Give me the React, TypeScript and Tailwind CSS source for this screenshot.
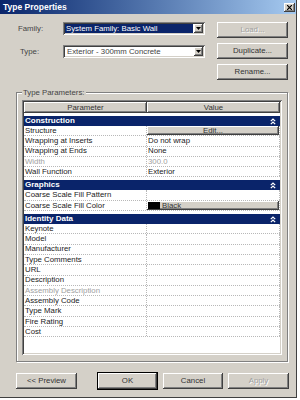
import React from "react";

type Row = {
  name: string;
  value?: string;
  kind?: "edit" | "color";
  disabled?: boolean;
};

type Group = { title: string; rows: Row[] };

const groups: Group[] = [
  {
    title: "Construction",
    rows: [
      { name: "Structure", kind: "edit" },
      { name: "Wrapping at Inserts", value: "Do not wrap" },
      { name: "Wrapping at Ends", value: "None" },
      { name: "Width", value: "300.0", disabled: true },
      { name: "Wall Function", value: "Exterior" },
    ],
  },
  {
    title: "Graphics",
    rows: [
      { name: "Coarse Scale Fill Pattern" },
      { name: "Coarse Scale Fill Color", kind: "color" },
    ],
  },
  {
    title: "Identity Data",
    rows: [
      { name: "Keynote" },
      { name: "Model" },
      { name: "Manufacturer" },
      { name: "Type Comments" },
      { name: "URL" },
      { name: "Description" },
      { name: "Assembly Description", disabled: true },
      { name: "Assembly Code" },
      { name: "Type Mark" },
      { name: "Fire Rating" },
      { name: "Cost" },
    ],
  },
];

const raised =
  "bg-[#d4d0c8] shadow-[inset_-1px_-1px_0_#404040,inset_1px_1px_0_#ffffff,inset_-2px_-2px_0_#808080]";
const sunken =
  "shadow-[inset_1px_1px_0_#808080,inset_-1px_-1px_0_#ffffff,inset_2px_2px_0_#404040,inset_-2px_-2px_0_#d4d0c8]";

function Button({
  label,
  width,
  disabled,
  primary,
}: {
  label: string;
  width: string;
  disabled?: boolean;
  primary?: boolean;
}) {
  return (
    <div
      className={`${width} h-[16px] flex items-center justify-center ${raised} ${
        primary ? "outline outline-1 outline-black" : ""
      } ${
        disabled
          ? "text-[#a0a0a0] [text-shadow:1px_1px_0_#ffffff]"
          : "text-[#333333]"
      }`}
    >
      {label}
    </div>
  );
}

function DropArrow() {
  return (
    <div className={`w-[9px] h-[9px] flex items-center justify-center ${raised}`}>
      <svg width="5" height="3" viewBox="0 0 5 3">
        <path d="M0 0h5L2.5 3z" fill="#000" />
      </svg>
    </div>
  );
}

function Chevrons() {
  return (
    <svg width="6" height="7" viewBox="0 0 6 7" fill="none" stroke="#fff" strokeWidth="1.2">
      <polyline points="0.8,3.2 3,1 5.2,3.2" />
      <polyline points="0.8,6.2 3,4 5.2,6.2" />
    </svg>
  );
}

export default function App() {
  return (
    <div className="w-[300px] h-[400px] bg-white font-['Liberation_Sans',Arial,sans-serif] text-[7.8px] leading-none">
      <div className="w-[297px] h-[398px] bg-[#d4d0c8] border-r border-b border-[#404040] flex flex-col">
        {/* title bar */}
        <div className="h-[14px] flex items-center justify-between pl-[3px] pr-[1px] bg-gradient-to-r from-[#0a246a] to-[#a6caf0]">
          <span className="text-white font-bold text-[8.5px]">Type Properties</span>
          <div className={`w-[11px] h-[9px] flex items-center justify-center ${raised}`}>
            <svg width="5" height="5" viewBox="0 0 5 5" stroke="#000" strokeWidth="1.2">
              <path d="M0 0L5 5M5 0L0 5" />
            </svg>
          </div>
        </div>

        {/* family / type */}
        <div className="flex mt-[8px] pl-[18px]">
          <div className="flex flex-col gap-[10px]">
            <div className="flex items-center">
              <span className="w-[45px] text-[#444444]">Family:</span>
              <div className={`w-[142px] h-[13px] bg-white p-[2px] flex items-center ${sunken}`}>
                <div className="flex-1 h-[9px] mr-[1px] bg-[#0a246a] text-white flex items-center pl-[1px]">
                  System Family: Basic Wall
                </div>
                <DropArrow />
              </div>
            </div>
            <div className="flex items-center">
              <span className="w-[45px] text-[#444444] pl-[2px]">Type:</span>
              <div className={`w-[142px] h-[13px] bg-white p-[2px] flex items-center ${sunken}`}>
                <div className="flex-1 h-[9px] text-[#444444] flex items-center pl-[2px]">
                  Exterior - 300mm Concrete
                </div>
                <DropArrow />
              </div>
            </div>
          </div>
          <div className="flex flex-col gap-[5px] ml-[12px]">
            <Button label="Load..." width="w-[71px]" disabled />
            <Button label="Duplicate..." width="w-[71px]" />
            <Button label="Rename..." width="w-[71px]" />
          </div>
        </div>

        {/* type parameters group */}
        <div className="relative ml-[16px] mt-[12px] w-[272px] h-[270px] border border-[#808080] shadow-[inset_1px_1px_0_#ffffff,1px_1px_0_#ffffff] pt-[7px] pl-[5px]">
          <span className="absolute -top-[4px] left-[5px] px-[1px] bg-[#d4d0c8] text-[#444444]">
            Type Parameters:
          </span>
          <div className={`w-[260px] h-[255px] bg-white p-[2px] ${sunken}`}>
            <div className="flex h-[11px]">
              <div className={`w-[123px] flex items-center justify-center text-[#333333] ${raised}`}>
                Parameter
              </div>
              <div className={`flex-1 flex items-center justify-center text-[#333333] ${raised}`}>
                Value
              </div>
            </div>
            {groups.map((g) => (
              <div key={g.title}>
                <div className="mt-[3px] h-[10px] bg-[#0a246a] flex items-center justify-between pl-[1px] pr-[4px]">
                  <span className="text-white font-bold text-[8px]">{g.title}</span>
                  <Chevrons />
                </div>
                {g.rows.map((r) => (
                  <div
                    key={r.name}
                    className="flex h-[10.3px] border-b border-dotted border-[#b8b8b8]"
                  >
                    <div
                      className={`w-[123px] flex items-center pl-[1px] border-r border-dotted border-[#b8b8b8] ${
                        r.disabled ? "text-[#a0a0a0]" : "text-[#1a1a1a]"
                      }`}
                    >
                      {r.name}
                    </div>
                    <div className="flex-1 flex items-center border-r border-dotted border-[#b8b8b8]">
                      {r.kind === "edit" ? (
                        <div className={`w-full h-full flex items-center justify-center text-[#333333] ${raised}`}>
                          Edit...
                        </div>
                      ) : r.kind === "color" ? (
                        <div className={`w-full h-full flex items-center pl-[1px] text-[#333333] ${raised}`}>
                          <div className="w-[12px] h-[7px] bg-black mr-[2px]" />
                          Black
                        </div>
                      ) : (
                        <span
                          className={`pl-[1px] ${
                            r.disabled ? "text-[#a0a0a0]" : "text-[#1a1a1a]"
                          }`}
                        >
                          {r.value}
                        </span>
                      )}
                    </div>
                  </div>
                ))}
              </div>
            ))}
          </div>
        </div>

        {/* footer buttons */}
        <div className="flex mt-[11px] pl-[16px]">
          <Button label="<< Preview" width="w-[61px]" />
          <div className="ml-[21px]">
            <Button label="OK" width="w-[59px]" primary />
          </div>
          <div className="ml-[6px]">
            <Button label="Cancel" width="w-[60px]" />
          </div>
          <div className="ml-[5px]">
            <Button label="Apply" width="w-[61px]" disabled />
          </div>
        </div>
      </div>
    </div>
  );
}
